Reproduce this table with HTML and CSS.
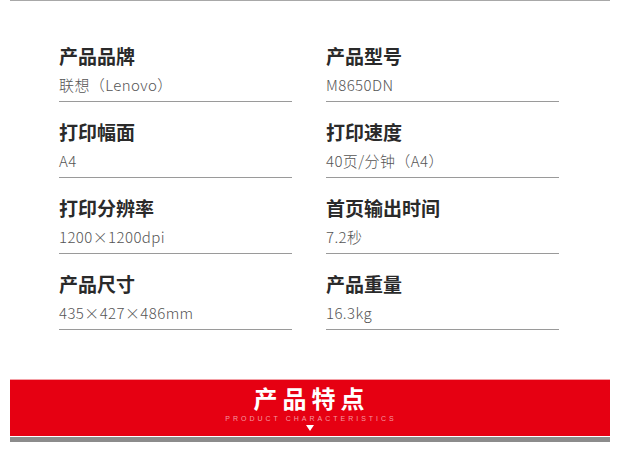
FILE: index.html
```html
<!DOCTYPE html>
<html lang="zh-CN">
<head>
<meta charset="utf-8">
<title>产品参数</title>
<link rel="stylesheet" href="styles.css">
</head>
<body>
<div class="topline"></div>
<div class="specs">
  <div class="item"><div class="label">产品品牌</div><div class="value">联想（Lenovo）</div></div>
  <div class="item"><div class="label">产品型号</div><div class="value">M8650DN</div></div>
  <div class="item"><div class="label">打印幅面</div><div class="value">A4</div></div>
  <div class="item"><div class="label">打印速度</div><div class="value">40页/分钟（A4）</div></div>
  <div class="item"><div class="label">打印分辨率</div><div class="value">1200×1200dpi</div></div>
  <div class="item"><div class="label">首页输出时间</div><div class="value">7.2秒</div></div>
  <div class="item"><div class="label">产品尺寸</div><div class="value">435×427×486mm</div></div>
  <div class="item"><div class="label">产品重量</div><div class="value">16.3kg</div></div>
</div>
<div class="banner">
  <div class="banner-red">
    <div class="banner-title">产品特点</div>
    <div class="banner-sub">PRODUCT CHARACTERISTICS</div>
    <div class="banner-arrow"></div>
  </div>
  <div class="banner-gray"></div>
</div>
</body>
</html>
```
FILE: styles.css
```css
html, body {
  margin: 0;
  padding: 0;
  background: #fff;
}
body {
  width: 619px;
  height: 457px;
  overflow: hidden;
  font-family: "Noto Sans CJK SC", "Noto Sans", sans-serif;
}
.topline {
  margin: 0 9px 0 10px;
  height: 1px;
  background: #a8a8a8;
}
.specs {
  display: grid;
  grid-template-columns: 233px 233px;
  column-gap: 34px;
  row-gap: 16px;
  padding: 41px 0 0 59px;
}
.item {
  border-bottom: 1px solid #9a9a9a;
  padding-bottom: 6px;
}
.label {
  font-size: 19px;
  font-weight: 700;
  line-height: 28px;
  color: #2a2a2a;
}
.value {
  margin-top: 5px;
  font-size: 15px;
  line-height: 20px;
  letter-spacing: 0.4px;
  color: #555;
  font-weight: 300;
}
.banner {
  margin: 49px 9px 0 10px;
}
.banner-red {
  height: 56px;
  background: #e60012;
  border-top: 1px solid #f4a0a6;
  display: flex;
  flex-direction: column;
  align-items: center;
}
.banner-title {
  margin-top: 4px;
  font-size: 24px;
  line-height: 28px;
  font-weight: 700;
  letter-spacing: 5px;
  padding-left: 3px;
  color: #fff;
}
.banner-sub {
  margin-top: 3px;
  font-family: "Liberation Sans", Arial, sans-serif;
  font-size: 7px;
  line-height: 8px;
  letter-spacing: 3px;
  padding-left: 2px;
  color: #f59aa1;
}
.banner-arrow {
  margin-top: 2px;
  width: 0;
  height: 0;
  border-left: 4px solid transparent;
  border-right: 4px solid transparent;
  border-top: 6px solid #fff;
}
.banner-gray {
  margin-top: 1px;
  height: 5px;
  background: #8c8c8c;
}
```
